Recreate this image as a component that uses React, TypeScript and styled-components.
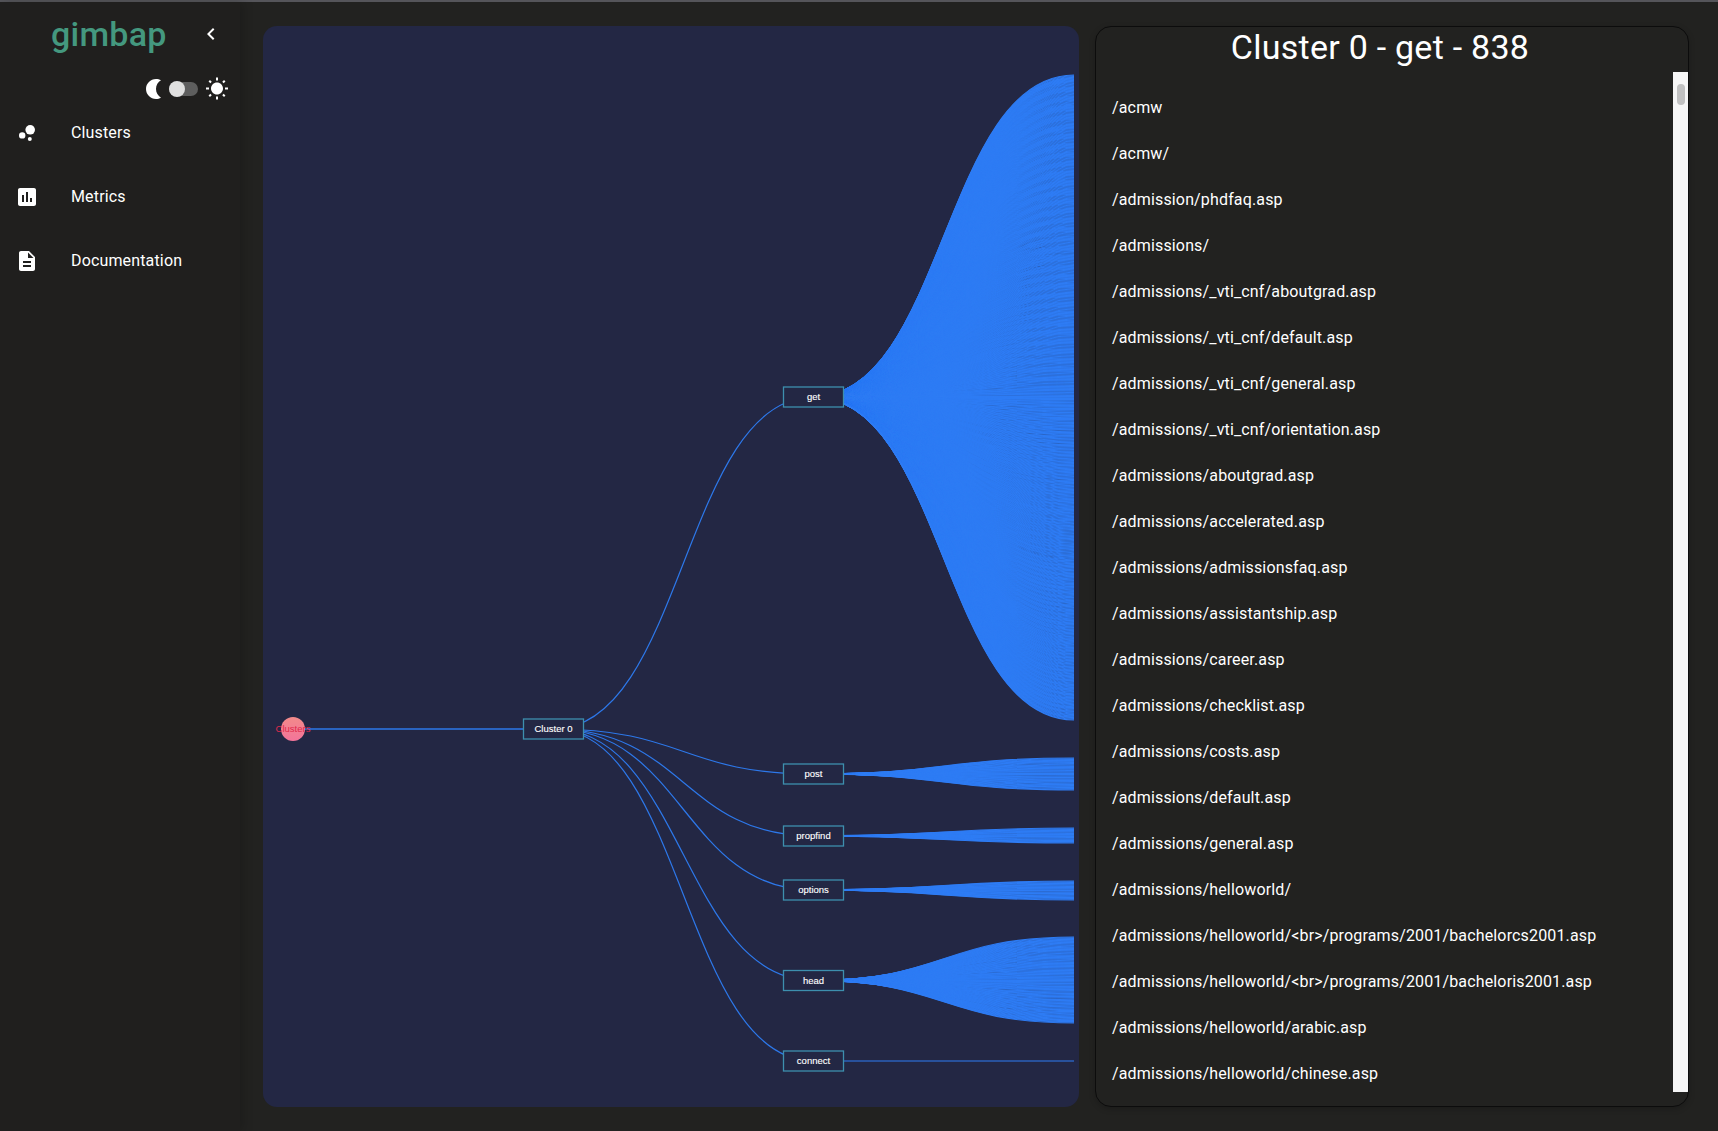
import React, { useMemo } from 'react';
import styled, { createGlobalStyle } from 'styled-components';
import { MdAssessment, MdBrightness2, MdBubbleChart, MdChevronLeft, MdDescription, MdWbSunny } from 'react-icons/md';

// --- palette ---
const Colors = {
  sidebar: '#201f1e',
  main: '#222220',
  chart: '#232744',
  text: '#ffffff',
  logo: '#44987f',
  fan: '#2e7cf4',
  link: '#2d78ea',
  node: '#3d8fae',
  rootText: '#e02a4c',
};

const GlobalStyle = createGlobalStyle`
  * { margin: 0; padding: 0; box-sizing: border-box; }
  html, body { height: 100%; }
  body {
    background: ${Colors.main};
    color: ${Colors.text};
    font-family: Roboto, 'Liberation Sans', sans-serif;
    overflow: hidden;
  }
`;

const Shell = styled.div`
  display: flex;
  height: 100vh;
  border-top: 2px solid #55555a;
`;

const Sidebar = styled.aside`
  width: 240px;
  flex-shrink: 0;
  background: ${Colors.sidebar};
  box-shadow: 3px 0 10px rgba(0, 0, 0, 0.18);
  display: flex;
  flex-direction: column;
`;

const Brand = styled.div`
  display: flex;
  align-items: center;
  height: 76px;
  padding: 0 0 12px 51px;
`;

const Logo = styled.h1`
  font-size: 34px;
  font-weight: 500;
  letter-spacing: 0.25px;
  color: ${Colors.logo};
  width: 148px;
`;

const Collapse = styled(MdChevronLeft)`
  font-size: 24px;
  color: ${Colors.text};
`;

const ThemeRow = styled.div`
  display: flex;
  align-items: center;
  justify-content: flex-end;
  height: 22px;
  padding-right: 11px;
`;

const Moon = styled(MdBrightness2)`
  font-size: 24px;
  transform: scaleX(-1);
  margin-right: 3px;
`;

const Sun = styled(MdWbSunny)`
  font-size: 24px;
  margin-left: 7px;
`;

const SwitchTrack = styled.div`
  position: relative;
  width: 29px;
  height: 14px;
  border-radius: 7px;
  background: #5e5e5e;
`;

const SwitchThumb = styled.div`
  position: absolute;
  left: 0;
  top: -1px;
  width: 16px;
  height: 16px;
  border-radius: 50%;
  background: #e0e0e0;
`;

const Nav = styled.nav`
  display: flex;
  flex-direction: column;
`;

const NavItem = styled.a`
  display: flex;
  align-items: center;
  height: 64px;
  padding-left: 15px;
  font-size: 16px;
  letter-spacing: 0.15px;
  color: ${Colors.text};
  svg {
    font-size: 24px;
    margin: 2px 32px 0 0;
    flex-shrink: 0;
  }
`;

const Main = styled.main`
  flex: 1;
  min-width: 0;
  display: grid;
  grid-template-columns: 816px 594px;
  gap: 16px;
  padding: 24px 29px 24px 23px;
`;

const ChartPanel = styled.section`
  background: ${Colors.chart};
  border-radius: 14px;
  overflow: hidden;
  padding-right: 5px;
`;

const ChartSvg = styled.svg`
  display: block;
  width: 811px;
  height: 1081px;
`;

const NodeLabel = styled.text`
  font-family: 'Liberation Sans', Arial, sans-serif;
  font-size: 9.5px;
  fill: ${Colors.text};
  stroke: ${Colors.text};
  stroke-width: 0.12px;
  text-anchor: middle;
  dominant-baseline: central;
`;

const RootLabel = styled(NodeLabel)`
  fill: ${Colors.rootText};
  stroke: none;
`;

const DetailPanel = styled.section`
  display: flex;
  flex-direction: column;
  min-height: 0;
  border: 1px solid #0c0c0c;
  border-radius: 16px;
  background: ${Colors.main};
  box-shadow: 0 2px 6px rgba(0, 0, 0, 0.2);
  overflow: hidden;
`;

const Title = styled.h2`
  font-size: 34px;
  font-weight: 400;
  letter-spacing: 0.25px;
  line-height: 40px;
  height: 45px;
  text-align: center;
  padding-right: 24px;
  flex-shrink: 0;
`;

const ListArea = styled.div`
  display: flex;
  height: 1020px;
`;

const PathList = styled.ul`
  flex: 1;
  min-width: 0;
  list-style: none;
  padding-top: 12px;
  overflow: hidden;
`;

const PathRow = styled.li`
  display: flex;
  align-items: center;
  height: 46px;
  padding-left: 16px;
  font-size: 16px;
  letter-spacing: 0.15px;
`;

const ScrollTrack = styled.div`
  width: 15px;
  flex-shrink: 0;
  background: #f6f6f6;
  padding: 12px 3px 0 4px;
`;

const ScrollThumb = styled.div`
  height: 21px;
  border-radius: 4px;
  background: #c1c1c1;
`;

const paths = [
  '/acmw',
  '/acmw/',
  '/admission/phdfaq.asp',
  '/admissions/',
  '/admissions/_vti_cnf/aboutgrad.asp',
  '/admissions/_vti_cnf/default.asp',
  '/admissions/_vti_cnf/general.asp',
  '/admissions/_vti_cnf/orientation.asp',
  '/admissions/aboutgrad.asp',
  '/admissions/accelerated.asp',
  '/admissions/admissionsfaq.asp',
  '/admissions/assistantship.asp',
  '/admissions/career.asp',
  '/admissions/checklist.asp',
  '/admissions/costs.asp',
  '/admissions/default.asp',
  '/admissions/general.asp',
  '/admissions/helloworld/',
  '/admissions/helloworld/<br>/programs/2001/bachelorcs2001.asp',
  '/admissions/helloworld/<br>/programs/2001/bacheloris2001.asp',
  '/admissions/helloworld/arabic.asp',
  '/admissions/helloworld/chinese.asp',
];

// tree coordinates, relative to the chart panel
const ROOT_X = 30;
const CLUSTER_X = 290.5;
const METHOD_X = 550.5;
const LEAF_X = 811;
const ROOT_Y = 703;
const NODE_W = 60;
const NODE_H = 20;

const methods = [
  { name: 'get', y: 371, top: 49, bottom: 694, leaves: 838 },
  { name: 'post', y: 748, top: 732, bottom: 764, leaves: 42 },
  { name: 'propfind', y: 810, top: 802, bottom: 817, leaves: 20 },
  { name: 'options', y: 864, top: 855, bottom: 874, leaves: 25 },
  { name: 'head', y: 954.5, top: 911, bottom: 997, leaves: 112 },
  { name: 'connect', y: 1035, top: 1035, bottom: 1035, leaves: 1 },
];

const link = (x0: number, y0: number, x1: number, y1: number) => {
  const mid = (x0 + x1) / 2;
  return `M${x0} ${y0}C${mid} ${y0} ${mid} ${y1} ${x1} ${y1}`;
};

const App: React.FC = () => {
  const leafLinks = useMemo(() => {
    const out: string[] = [];
    methods.forEach(m => {
      for (let i = 0; i < m.leaves; i++) {
        const y = m.leaves === 1 ? m.top : m.top + ((m.bottom - m.top) * i) / (m.leaves - 1);
        out.push(link(METHOD_X, m.y, LEAF_X, y));
      }
    });
    return out;
  }, []);

  return (
    <Shell>
      <GlobalStyle />
      <Sidebar>
        <Brand>
          <Logo>gimbap</Logo>
          <Collapse />
        </Brand>
        <ThemeRow>
          <Moon />
          <SwitchTrack><SwitchThumb /></SwitchTrack>
          <Sun />
        </ThemeRow>
        <Nav>
          <NavItem><MdBubbleChart />Clusters</NavItem>
          <NavItem><MdAssessment />Metrics</NavItem>
          <NavItem><MdDescription />Documentation</NavItem>
        </Nav>
      </Sidebar>
      <Main>
        <ChartPanel>
          <ChartSvg viewBox="0 0 811 1081">
            <defs>
              <linearGradient id="rootFill" x1="0" y1="0" x2="0" y2="1">
                <stop offset="0" stopColor="#f28a8a" />
                <stop offset="1" stopColor="#f4749a" />
              </linearGradient>
            </defs>
            <g fill="none" stroke={Colors.fan} strokeWidth={1.15}>
              {leafLinks.map((d, i) => <path key={i} d={d} />)}
            </g>
            <g fill="none" stroke={Colors.link} strokeWidth={1.2}>
              <path d={`M${ROOT_X} ${ROOT_Y}H${CLUSTER_X}`} strokeWidth={1.5} />
              {methods.map(m => (
                <path key={m.name} d={link(CLUSTER_X, ROOT_Y, METHOD_X, m.y)} />
              ))}
            </g>
            <circle cx={ROOT_X} cy={ROOT_Y} r={12} fill="url(#rootFill)" />
            <RootLabel x={ROOT_X} y={ROOT_Y - 0.5}>Clusters</RootLabel>
            <rect x={CLUSTER_X - NODE_W / 2} y={ROOT_Y - NODE_H / 2} width={NODE_W} height={NODE_H} fill={Colors.chart} stroke={Colors.node} strokeWidth={1.3} />
            <NodeLabel x={CLUSTER_X} y={ROOT_Y - 0.5}>Cluster 0</NodeLabel>
            {methods.map(m => (
              <g key={m.name}>
                <rect x={METHOD_X - NODE_W / 2} y={m.y - NODE_H / 2} width={NODE_W} height={NODE_H} fill={Colors.chart} stroke={Colors.node} strokeWidth={1.3} />
                <NodeLabel x={METHOD_X} y={m.y - 0.5}>{m.name}</NodeLabel>
              </g>
            ))}
          </ChartSvg>
        </ChartPanel>
        <DetailPanel>
          <Title>Cluster 0 - get - 838</Title>
          <ListArea>
            <PathList>
              {paths.map(p => <PathRow key={p}>{p}</PathRow>)}
            </PathList>
            <ScrollTrack><ScrollThumb /></ScrollTrack>
          </ListArea>
        </DetailPanel>
      </Main>
    </Shell>
  );
};

export default App;
